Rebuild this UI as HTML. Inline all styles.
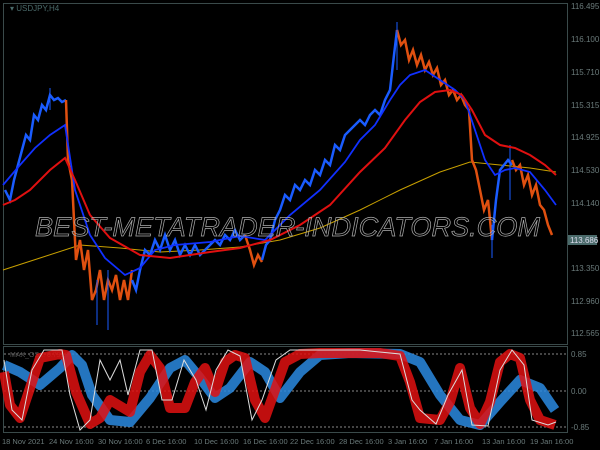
<!DOCTYPE html>
<html><head><style>
html,body{margin:0;padding:0;background:#000;}
svg{display:block;}
text{font-family:"Liberation Sans",sans-serif;}
</style></head><body>
<svg width="600" height="450" viewBox="0 0 600 450" xmlns="http://www.w3.org/2000/svg">
<rect width="600" height="450" fill="#000"/>
<rect x="3.5" y="3.5" width="564" height="341" fill="none" stroke="#3a4a4a" stroke-width="1"/>
<rect x="3.5" y="346.5" width="564" height="86" fill="none" stroke="#3a4a4a" stroke-width="1"/>
<text x="10" y="11" font-size="8" fill="#4a6a6a">▾ USDJPY,H4</text>
<g font-size="8" fill="#6a7a7a">
<text x="571" y="9">116.495</text>
<text x="571" y="42">116.100</text>
<text x="571" y="75">115.710</text>
<text x="571" y="108">115.315</text>
<text x="571" y="140">114.925</text>
<text x="571" y="173">114.530</text>
<text x="571" y="206">114.140</text>
<text x="571" y="271">113.350</text>
<text x="571" y="304">112.960</text>
<text x="571" y="336">112.565</text>
<text x="571" y="357">0.85</text>
<text x="571" y="394">0.00</text>
<text x="571" y="430">-0.85</text>
</g>
<rect x="568" y="235" width="29" height="10" fill="#4a6a6a"/>
<text x="570" y="243" font-size="8" fill="#dde">113.686</text>
<polyline fill="none" stroke="#c8a000" stroke-width="1" points="3,270 40,258 80,245 120,248 160,252 200,250 240,247 280,240 320,228 360,210 400,190 440,172 470,162 500,165 530,168 556,172"/>
<g stroke-width="2.5" fill="none">
<polyline stroke="#1a5cff" points="5,190 10,200 14,180 18,165 22,150 26,135 30,140 34,115 38,120 42,105 46,110 50,95 54,100 58,98 62,102 66,100"/>
<polyline stroke="#e05010" points="66,100 68,160 72,180 76,260 80,240 84,270 88,250 92,300 96,290 100,270 104,300 108,280 112,290 116,275 120,300 124,280 128,300 132,270"/>
<polyline stroke="#1a5cff" points="132,280 136,290 140,270 145,250 150,255 155,240 160,250 165,235 170,250 175,240 180,255 185,245 190,255 195,245 200,255 205,250 210,245 215,240 220,245 225,235 230,240 235,230 240,240 245,235"/>
<polyline stroke="#e05010" points="245,235 250,250 254,265 258,255 262,262"/>
<polyline stroke="#1a5cff" points="262,260 266,245 270,240 275,220 280,210 285,195 290,200 295,185 300,190 305,180 310,185 315,170 320,175 325,160 330,165 335,145 340,150 345,135 350,130 355,125 360,120 365,125 370,115 375,110 380,115 385,100 390,90 394,55 397,30"/>
<polyline stroke="#e05010" points="397,30 401,45 405,40 409,60 413,50 417,65 421,55 425,70 429,62 433,75 437,68 441,85 445,80 449,95 453,90 457,100 461,95 465,105 469,110 472,160 476,170 480,190 484,210 488,200 492,240"/>
<polyline stroke="#1a5cff" points="492,240 496,200 500,170 504,165 508,160 512,165"/>
<polyline stroke="#e05010" points="512,160 516,170 520,165 524,185 528,175 532,195 536,185 540,205 544,210 548,225 552,235"/>
</g>
<g stroke="#1a5cff" stroke-width="1">
<line x1="50" y1="88" x2="50" y2="110"/><line x1="97" y1="280" x2="97" y2="325"/><line x1="108" y1="270" x2="108" y2="330"/><line x1="397" y1="22" x2="397" y2="70"/><line x1="492" y1="225" x2="492" y2="258"/><line x1="510" y1="145" x2="510" y2="200"/>
</g>
<polyline fill="none" stroke="#1030ff" stroke-width="1.8" points="3,185 20,165 35,148 50,135 65,125 75,190 90,235 105,258 125,275 140,268 155,250 175,245 210,242 240,236 265,240 290,215 320,190 345,162 360,140 375,125 390,100 400,85 410,75 425,70 440,80 455,90 465,100 475,130 485,160 495,175 505,170 515,168 530,172 545,190 556,205"/>
<polyline fill="none" stroke="#e01010" stroke-width="2" points="3,205 15,200 30,190 50,170 65,158 75,180 90,215 110,238 140,255 170,258 210,252 240,248 270,240 300,225 330,205 360,172 385,148 405,120 420,102 435,92 450,90 462,95 472,110 485,135 500,145 515,148 530,155 545,165 556,175"/>
<text x="35" y="236" font-size="27" font-style="italic" fill="none" stroke="#aaaaaa" stroke-width="0.7" textLength="505" lengthAdjust="spacingAndGlyphs">BEST-METATRADER-INDICATORS.COM</text>
<g stroke="#888" stroke-width="1" stroke-dasharray="2,2">
<line x1="4" y1="354" x2="567" y2="354"/><line x1="4" y1="391" x2="567" y2="391"/><line x1="4" y1="427" x2="567" y2="427"/>
</g>
<text x="10" y="357" font-size="7" fill="#555">MAX_OS... 0.7918</text>
<polyline fill="none" stroke="#2a8ae0" stroke-width="10" stroke-linejoin="round" opacity="0.85" points="4,365 20,372 40,385 60,368 72,355 82,365 92,395 110,420 130,422 150,398 170,368 185,360 200,378 215,398 230,388 250,362 265,372 280,398 300,372 320,355 350,353 400,354 420,362 440,395 460,420 480,425 500,402 520,380 540,388 555,410"/>
<polyline fill="none" stroke="#e01010" stroke-width="10" stroke-linejoin="round" opacity="0.85" points="4,372 10,405 20,418 30,388 40,358 60,354 66,355 76,392 90,424 100,418 110,400 130,412 140,372 150,355 160,368 170,408 185,408 195,382 205,368 215,392 225,362 235,355 245,358 255,400 265,418 275,390 285,362 300,354 320,353 350,353 380,353 400,356 410,382 420,418 440,420 450,402 460,368 470,408 480,424 490,402 500,362 510,354 520,358 530,400 540,420 555,425"/>
<polyline fill="none" stroke="#dddddd" stroke-width="1" points="4,360 12,410 22,420 32,370 44,350 62,350 70,395 80,430 90,420 100,360 110,380 120,360 128,395 140,350 152,350 162,400 172,400 184,360 196,380 206,410 216,370 228,350 240,356 252,420 262,400 276,360 290,350 310,350 360,350 400,354 412,400 420,410 436,424 448,395 462,370 472,425 488,426 500,370 512,350 524,365 532,420 548,425 556,422"/>
<g font-size="7.5" fill="#6a7a7a">
<text x="2" y="444">18 Nov 2021</text>
<text x="49" y="444">24 Nov 16:00</text>
<text x="98" y="444">30 Nov 16:00</text>
<text x="146" y="444">6 Dec 16:00</text>
<text x="194" y="444">10 Dec 16:00</text>
<text x="243" y="444">16 Dec 16:00</text>
<text x="290" y="444">22 Dec 16:00</text>
<text x="339" y="444">28 Dec 16:00</text>
<text x="388" y="444">3 Jan 16:00</text>
<text x="434" y="444">7 Jan 16:00</text>
<text x="482" y="444">13 Jan 16:00</text>
<text x="530" y="444">19 Jan 16:00</text>
</g>
</svg>
</body></html>
